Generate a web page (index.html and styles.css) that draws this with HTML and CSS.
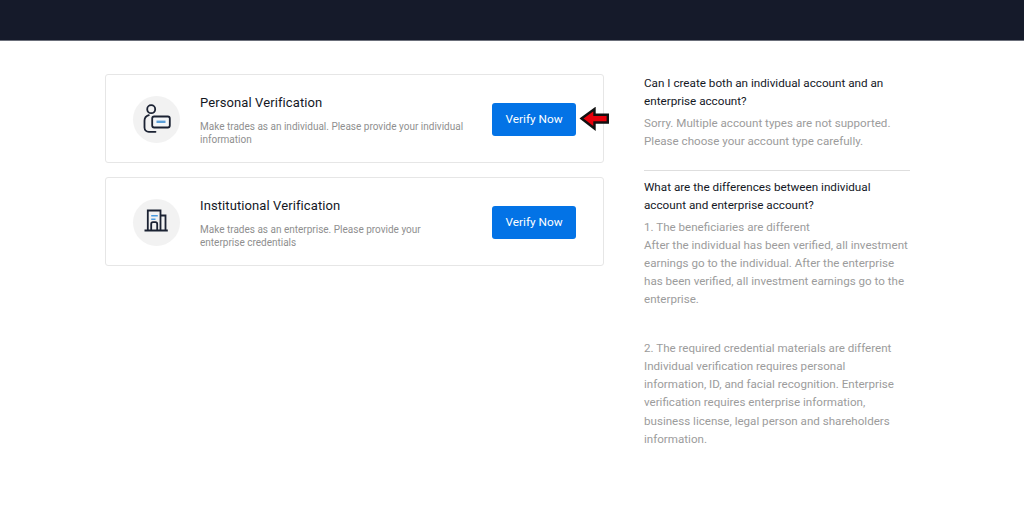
FILE: index.html
```html
<!DOCTYPE html>
<html lang="en">
<head>
<meta charset="utf-8">
<title>Verification</title>
<link rel="stylesheet" href="styles.css">
</head>
<body>
<header class="topbar"></header>
<main class="content">
  <section class="cards">
    <article class="card">
      <div class="icon-circle">
        <svg width="30" height="30" viewBox="0 0 30 30" fill="none" stroke="#1b2233" stroke-width="1.8">
          <circle cx="9.2" cy="5.2" r="4"/>
          <path d="M6.8 11.2C4 12 2.5 14 2.5 16.8V23.5C2.5 26 4.5 27.8 6.8 27.8H13.5" stroke-linecap="round"/>
          <rect x="10.2" y="12.5" width="17.6" height="11" rx="2" fill="#f4f6f8"/>
          <path d="M14.5 17.8H23.5" stroke="#5b9fd8" stroke-width="2.4"/>
        </svg>
      </div>
      <div class="card-text">
        <h2 class="card-title">Personal Verification</h2>
        <p class="card-desc">Make trades as an individual. Please provide your individual information</p>
      </div>
      <div class="action">
        <a class="verify-btn">Verify Now</a>
        <svg class="pointer" width="31" height="24" viewBox="0 0 31 24">
          <path d="M2.5 11.5L15.5 2V7.8H28.8V15.5H15.5V21.5Z" fill="#e8000b" stroke="#111" stroke-width="2.4"/>
        </svg>
      </div>
    </article>
    <article class="card">
      <div class="icon-circle">
        <svg width="30" height="30" viewBox="0 0 30 30" fill="none" stroke="#1b2233" stroke-width="1.8">
          <path d="M2.5 23.5H25.8" stroke-width="2"/>
          <path d="M5.8 23.5V3.5H18.5V23.5"/>
          <path d="M18.5 8.5H23.5V23.5"/>
          <path d="M9.2 23.5V17C9.2 15.8 10 15.2 11 15.2H13.4C14.4 15.2 15.2 15.8 15.2 17V23.5"/>
          <path d="M9.2 8.8H15.8M9.2 12.2H13.5" stroke="#4a9be0" stroke-width="1.6"/>
        </svg>
      </div>
      <div class="card-text">
        <h2 class="card-title">Institutional Verification</h2>
        <p class="card-desc">Make trades as an enterprise. Please provide your enterprise credentials</p>
      </div>
      <div class="action">
        <a class="verify-btn">Verify Now</a>
      </div>
    </article>
  </section>
  <aside class="faq">
    <div class="faq-item">
      <h3 class="faq-q">Can I create both an individual account and an enterprise account?</h3>
      <p class="faq-a">Sorry. Multiple account types are not supported. Please choose your account type carefully.</p>
    </div>
    <div class="faq-item">
      <h3 class="faq-q">What are the differences between individual account and enterprise account?</h3>
      <p class="faq-a">1. The beneficiaries are different<br>After the individual has been verified, all investment earnings go to the individual. After the enterprise has been verified, all investment earnings go to the enterprise.</p>
      <p class="faq-a faq-gap">2. The required credential materials are different<br>Individual verification requires personal information, ID, and facial recognition. Enterprise verification requires enterprise information, business license, legal person and shareholders information.</p>
    </div>
  </aside>
</main>
</body>
</html>
```
FILE: styles.css
```css
* { box-sizing: border-box; }
html, body { margin: 0; padding: 0; }
body {
  background: #fff;
  font-family: Roboto, "Liberation Sans", sans-serif;
  height: 519px;
  overflow: hidden;
}
.topbar {
  height: 41px;
  background: #151a2a;
  border-bottom: 1px solid #6b6f7a;
}
.content {
  display: flex;
  align-items: flex-start;
  gap: 40px;
  padding: 33px 0 0 105px;
}
.cards {
  width: 499px;
  display: flex;
  flex-direction: column;
  gap: 14px;
}
.card {
  height: 89px;
  display: flex;
  align-items: center;
  border: 1px solid #e6e6e6;
  border-radius: 3px;
  padding: 1px 27px 0;
}
.icon-circle {
  width: 47px;
  height: 47px;
  flex: none;
  border-radius: 50%;
  background: #f2f2f2;
  display: flex;
  align-items: center;
  justify-content: center;
  margin-right: 20px;
}
.card-text { width: 266px; padding-top: 2px; }
.card-title {
  margin: 0 0 9px;
  font-size: 13px;
  font-weight: 400;
  line-height: 16px;
  letter-spacing: 0.1px;
  color: #14181f;
}
.card-desc {
  margin: 0;
  font-size: 10px;
  line-height: 13px;
  color: #8f8f8f;
}
.action {
  position: relative;
  margin-left: auto;
}
.verify-btn {
  display: flex;
  align-items: center;
  justify-content: center;
  width: 84px;
  height: 33px;
  background: #0373e6;
  border-radius: 3px;
  color: #fff;
  font-size: 11.8px;
}
.pointer {
  position: absolute;
  left: 87px;
  top: 4px;
}
.faq { width: 266px; }
.faq-item + .faq-item {
  border-top: 1px solid #dedede;
  margin-top: 20px;
  padding-top: 7px;
}
.faq-q {
  margin: 0;
  font-size: 11.7px;
  font-weight: 400;
  line-height: 18.2px;
  color: #14181f;
}
.faq-a {
  margin: 3.3px 0 0;
  font-size: 11.6px;
  line-height: 18.1px;
  color: #9c9c9c;
}
.faq-a.faq-gap { margin-top: 30.5px; line-height: 18.3px; }
```
